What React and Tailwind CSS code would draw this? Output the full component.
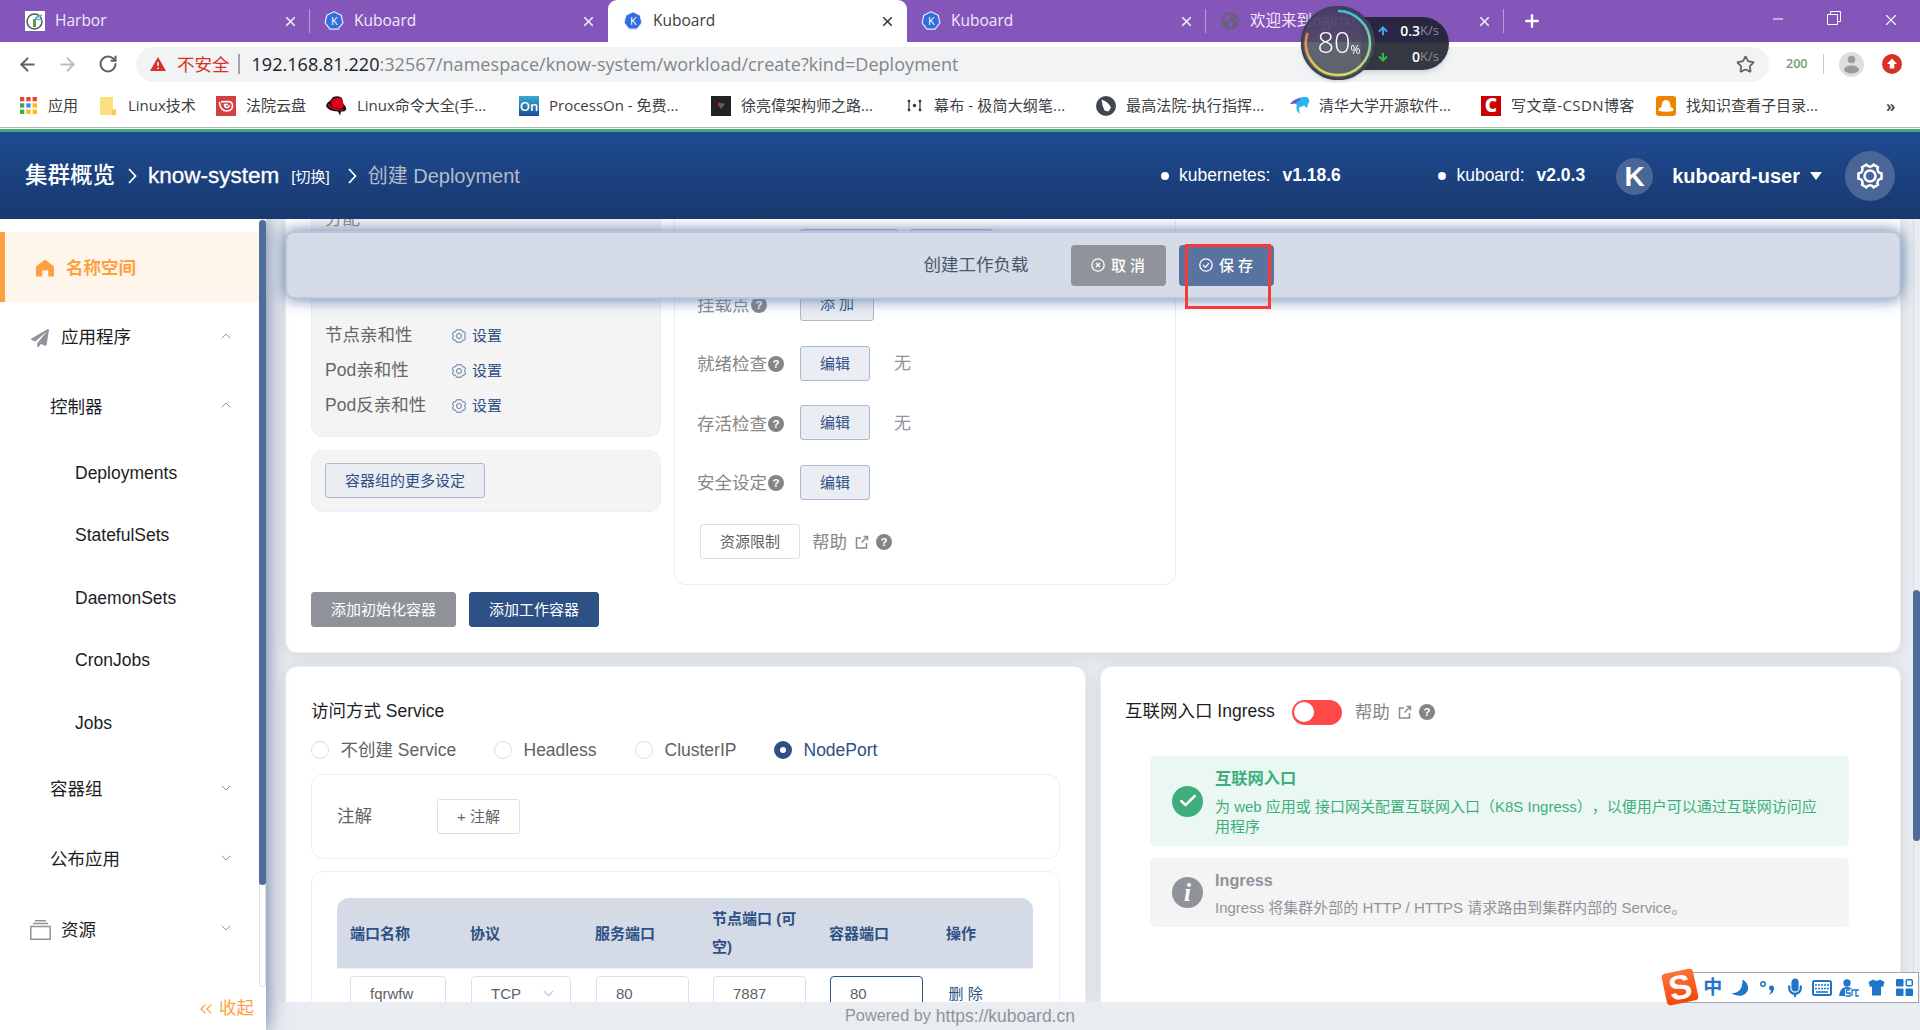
import React from 'react';
import {
  ArrowLeft, ArrowRight, RotateCw, Star, X, Plus, Minus, ChevronDown, ChevronUp,
  ChevronsLeft, Check, Mic, ArrowUp, ArrowDown,
} from 'lucide-react';
import { FaGlobeAmericas, FaPaperPlane } from 'react-icons/fa';

const KuboardIcon = () => (
  <svg viewBox="0 0 24 24" className="h-5 w-5 shrink-0">
    <path d="M12 1l8.6 4.1 2.1 9.2-5.9 7.5H7.2l-5.9-7.5 2.1-9.2z" fill="#2f6de0" stroke="#e8ecfb" strokeWidth="1.4" strokeLinejoin="round" />
    <text x="12.3" y="16.5" fontSize="13" fill="#fff" textAnchor="middle" fontFamily="Open Sans">K</text>
  </svg>
);

const HarborIcon = () => (
  <svg viewBox="0 0 20 20" className="h-5 w-5 shrink-0">
    <rect width="20" height="20" fill="#fff" />
    <circle cx="9.5" cy="10.5" r="7.5" fill="none" stroke="#4b5a55" strokeWidth="1.5" />
    <path d="M8 8h3v8H8z" fill="#5f9a4e" />
    <path d="M10 7l7-3M10 8l7 1" stroke="#6fa6c9" strokeWidth="1.6" />
  </svg>
);

const GearIcon = ({ className, sw = 1.6 }) => (
  <svg viewBox="0 0 24 24" className={className} fill="none" stroke="currentColor" strokeWidth={sw} strokeLinejoin="round">
    <path d="M9 2.2a3.4 3.4 0 0 0 6 0l3.9 2.3a3.4 3.4 0 0 0 3 5.2v4.6a3.4 3.4 0 0 0-3 5.2L15 21.8a3.4 3.4 0 0 0-6 0l-3.900-2.300a3.4 3.4 0 0 0-3-5.200V9.700a3.4 3.4 0 0 0 3-5.200z" />
    <circle cx="12" cy="12" r="4.700" />
  </svg>
);

const HexGear = () => (
  <svg viewBox="0 0 14 14" className="h-[14px] w-[14px]" fill="none" stroke="#4b6b98" strokeWidth=".9">
    <path d="M4.500.8h5l1 2 2.200.3.800 2-1 1.900 1 1.900-.8 2-2.200.3-1 2h-5l-1-2-2.200-.3-.8-2 1-1.900-1-1.900.8-2 2.200-.3z" />
    <circle cx="7" cy="7" r="2.500" />
  </svg>
);

const Help = () => (
  <svg viewBox="0 0 16 16" className="h-4 w-4 shrink-0">
    <circle cx="8" cy="8" r="8" fill="#858585" />
    <text x="8" y="12" fontSize="11.500" fontWeight="bold" fill="#fff" textAnchor="middle" fontFamily="Liberation Sans">?</text>
  </svg>
);

const LinkIcon = () => (
  <svg viewBox="0 0 14 14" className="h-[14px] w-[14px]" fill="none" stroke="#8a8d92" strokeWidth="1.500">
    <path d="M6 3H1.500v10h10V8M8.500 1.500h4v4M12.500 1.500L6.500 7.500" />
  </svg>
);

const tabs = [
  { title: 'Harbor', icon: <HarborIcon />, width: 'w-[310px] pl-[25px]', line: true },
  { title: 'Kuboard', icon: <KuboardIcon />, width: 'w-[298px] pl-[14px]' },
  { title: 'Kuboard', icon: <KuboardIcon />, width: 'w-[299px] pl-[15px]', active: true },
  { title: 'Kuboard', icon: <KuboardIcon />, width: 'w-[299px] pl-[14px]', line: true },
  { title: '欢迎来到nginx!', icon: <FaGlobeAmericas className="h-[18px] w-5 text-[#66607c]" />, width: 'w-[298px] pl-[14px]', line: true },
];

const AppsIcon = () => (
  <svg viewBox="0 0 17 17" className="h-[17px] w-[17px]">
    {['#ea4335', '#ea4335', '#ea4335', '#34a853', '#4285f4', '#fbbc04', '#34a853', '#fbbc04', '#fbbc04'].map((c, i) => (
      <rect key={i} x={(i % 3) * 6.3} y={Math.floor(i / 3) * 6.3} width="4.300" height="4.300" fill={c} />
    ))}
  </svg>
);

const bookmarks = [
  { label: '应用', icon: <AppsIcon />, width: 'w-[80px]', gap: 'gap-[11px]' },
  { label: 'Linux技术', width: 'w-[116px]', gap: 'gap-[12px]', icon: <svg viewBox="0 0 16 18" className="h-[18px] w-4"><path d="M1.500 0h11.500v12h3v4.500q0 1.500-1.500 1.500h-13Q0 18 0 16.500v-15Q0 0 1.500 0z" fill="#fddf82" /><path d="M12 13h4v3.500q0 1.500-2 1.500h-2z" fill="#f4c94f" /></svg> },
  { label: '法院云盘', width: 'w-[110px]', gap: 'gap-[10px]', icon: <svg viewBox="0 0 20 20" className="h-5 w-5"><rect width="20" height="20" fill="#d0413f" /><path d="M3.500 6Q4 15 11 15q5.500-.5 5.500-5T12 5.500l-7 .2M12 8.500H8.500q0 3 2.500 3t2-2.500" fill="none" stroke="#fff" strokeWidth="1.600" /></svg> },
  { label: 'Linux命令大全(手...', width: 'w-[193px]', gap: 'gap-[10px]', icon: <svg viewBox="0 0 21 20" className="h-5 w-[21px]"><path d="M0 10Q1 6 4 5l3-4q6-2 9 1l1.500 6Q21 11 20 14q-2 2-5 1.500l-1 4-2-4Q2 15 0 10z" fill="#111" /><path d="M5 7l2.500-5q2 1 4-.500 4-.5 5 3l1 4.500q1 4-5 3.500Q5 11.500 5 7z" fill="#e0001b" /><path d="M1.500 9Q5 14 13 14.500q4 .5 5.500-1.500-6 1-10-1Q4 10 3.500 7.500z" fill="#e0001b" /></svg> },
  { label: 'ProcessOn - 免费...', width: 'w-[192px]', gap: 'gap-[10px]', icon: <span className="h-5 w-5 bg-gradient-to-b from-[#3aa9d0] to-[#1c4f96] text-center text-[13px] font-semibold leading-5 text-white">On</span> },
  { label: '徐亮偉架构师之路...', width: 'w-[196px]', gap: 'gap-[10px]', icon: <svg viewBox="0 0 20 20" className="h-5 w-5"><rect width="20" height="20" fill="#222" /><path d="M7 9l3-2 3 2-3 4z" fill="#8b4a3a" /><circle cx="8.500" cy="8" r="1.500" fill="#b0343f" /><circle cx="11.500" cy="8.500" r="1.500" fill="#3b7f67" /></svg> },
  { label: '幕布 - 极简大纲笔...', width: 'w-[189px] tracking-[0.150px]', gap: 'gap-[12px]', icon: <svg viewBox="0 0 15 13" className="h-[13px] w-[15px]" fill="#333" stroke="#333"><path d="M2 2v9M13 2v9" strokeWidth="1.200" /><circle cx="2" cy="2" r="1" /><circle cx="2" cy="11" r="1" /><circle cx="13" cy="2" r="1" /><circle cx="13" cy="11" r="1" /><circle cx="7.500" cy="6.500" r="1.300" /></svg> },
  { label: '最高法院-执行指挥...', width: 'w-[194px] tracking-[0.150px]', gap: 'gap-[10px]', icon: <svg viewBox="0 0 20 20" className="h-5 w-5"><circle cx="10" cy="10" r="10" fill="#414750" /><path d="M5.500 3.500q7 2.500 9.500 8l-2.500 4-4-1q-2.500-5-3-11z" fill="#fff" /></svg> },
  { label: '清华大学开源软件...', width: 'w-[191px]', gap: 'gap-[9px]', icon: <svg viewBox="0 0 20 18" className="h-[18px] w-5"><path d="M0 7Q7-1 17 0q4 3 1 7l-1 4-3-2.500q-3 1.500-5 2 0 4 1 6.500Q5 13 7 8 4 5 0 7z" fill="#29b5ef" /><path d="M0 7Q5 1 11 2 7 7 0 7z" fill="#8552c5" /></svg> },
  { label: '写文章-CSDN博客', width: 'w-[175px] tracking-[0.400px]', gap: 'gap-[10px]', icon: <span className="h-5 w-5 bg-[#cb0000] text-center text-[19px] font-extrabold leading-[19px] text-white">C</span> },
  { label: '找知识查看子目录...', width: 'w-[200px]', gap: 'gap-[10px]', icon: <svg viewBox="0 0 20 20" className="h-5 w-5"><rect width="20" height="20" rx="3" fill="#f08300" /><path d="M3 15q-1.500-3 2.500-4Q5.500 4 10 4t4.500 7q4 1 2.500 4-7 1.500-14 0z" fill="#fff" /></svg> },
];

const BrowserChrome = () => (
  <div className="relative text-[#3c4043] [font-family:'Open_Sans','Noto_Sans_CJK_SC',sans-serif]">
    <div className="flex h-[42px] bg-[#8456ba] text-[15.500px]">
      {tabs.map((t, i) => (
        <div
          key={i}
          className={`flex shrink-0 items-center pr-[12px] ${t.width} ${t.active ? 'rounded-t-[9px] bg-white text-[#3c4043]' : 'text-[#f1e8fa]'}`}
        >
          {t.icon}
          <span className="ml-[10px] grow whitespace-nowrap">{t.title}</span>
          <X className="h-[15px] w-[15px]" strokeWidth={2.800} />
          {t.line && <span className="-mr-[12px] ml-[11px] h-6 w-px bg-[#b69bd8]" />}
        </div>
      ))}
      <Plus className="ml-[18px] mt-[11px] h-[20px] w-[20px] text-white" strokeWidth={2.800} />
      <div className="flex grow items-start justify-end gap-[41px] pr-[20px] pt-[11px] text-white">
        <Minus className="h-4 w-4" strokeWidth={1.500} />
        <svg viewBox="0 0 14 14" className="h-[14px] w-[14px]" fill="none" stroke="#fff"><path d="M.5 3.500h10v10H.5zM3.500 3.500v-3h10v10h-3" /></svg>
        <X className="h-[18px] w-[18px]" strokeWidth={1.500} />
      </div>
    </div>

    <div className="flex h-[44px] items-center bg-white pl-[17px]">
      <ArrowLeft className="h-[21px] w-[21px] text-[#5f6368]" strokeWidth={2.400} />
      <ArrowRight className="ml-[19px] h-[21px] w-[21px] text-[#bcbec1]" strokeWidth={2.400} />
      <RotateCw className="ml-[20px] h-[20px] w-[20px] text-[#5f6368]" strokeWidth={2.400} />
      <div className="ml-[18px] flex h-[35px] w-[1633px] items-center rounded-full bg-[#f1f3f4] pl-[14px] pr-[14px] text-[17.500px]">
        <svg viewBox="0 0 16 14" className="h-[14px] w-4"><path d="M8 0l8 14H0z" fill="#d93025" /><path d="M8 5v4M8 10.500v1.500" stroke="#fff" strokeWidth="1.500" /></svg>
        <span className="ml-[11px] text-[#d93025]">不安全</span>
        <span className="ml-[8px] h-5 w-[2px] bg-[#a3a5a8]" />
        <span className="ml-[12px] grow whitespace-nowrap pt-px text-[18px] tracking-[0.040px] text-[#80868b]">
          <span className="text-[#202124]">192.168.81.220</span>:32567/namespace/know-system/workload/create?kind=Deployment
        </span>
        <Star className="h-[19px] w-[19px] text-[#5f6368]" strokeWidth={2.200} />
      </div>
      <span className="ml-[17px] text-[12.500px] font-semibold text-[#6d9f6b]">200</span>
      <span className="ml-[16px] h-5 w-px bg-[#c6c8ca]" />
      <svg viewBox="0 0 25 25" className="ml-[15px] h-[25px] w-[25px]"><circle cx="12.500" cy="12.500" r="12.500" fill="#dedede" /><circle cx="12.500" cy="7.500" r="3.800" fill="#9b9b9b" /><ellipse cx="12.500" cy="17.500" rx="7.500" ry="4" fill="#9b9b9b" /></svg>
      <svg viewBox="0 0 20 20" className="ml-[18px] h-5 w-5"><circle cx="10" cy="10" r="10" fill="#d93025" /><path d="M10 4.500l5 5.500h-2.700v4.500H7.700V10H5z" fill="#fff" /></svg>
    </div>

    <div className="flex h-[41px] items-center bg-white pl-[20px] pb-[2px] text-[15px]">
      {bookmarks.map((b) => (
        <div key={b.label} className={`flex shrink-0 items-center whitespace-nowrap ${b.width} ${b.gap}`}>
          {b.icon}
          <span>{b.label}</span>
        </div>
      ))}
      <span className="ml-[30px] text-[17px] font-semibold leading-none">»</span>
    </div>
    <div className="h-px bg-[#b4b4b4]" />
    <div className="h-px bg-white" />

    {/* floating network meter */}
    <div className="absolute left-[1301px] top-[6px] h-[74px] w-[148px]">
      <div className="absolute left-[60px] top-[11px] flex h-[53px] w-[88px] flex-col justify-center rounded-r-full bg-gradient-to-b from-[#292642] from-45% to-[#343843] to-50% pl-[16px] shadow-md">
        <div className="flex h-[26px] items-center text-[14px] text-white"><ArrowUp className="h-3 w-3 text-[#42a4ea]" strokeWidth={4} /><span className="grow text-right font-semibold">0.3</span><span className="mr-[10px] text-[13px] text-[#898997]">K/s</span></div>
        <div className="flex h-[26px] items-center text-[14px] text-white"><ArrowDown className="h-3 w-3 text-[#35b844]" strokeWidth={4} /><span className="grow text-right font-semibold">0</span><span className="mr-[10px] text-[13px] text-[#898997]">K/s</span></div>
      </div>
      <svg viewBox="0 0 74 74" className="absolute h-[74px] w-[74px] drop-shadow">
        <defs>
          <linearGradient id="ball" x1="0" y1="0" x2="0" y2="1">
            <stop offset="0" stopColor="#433a66" />
            <stop offset=".48" stopColor="#504b64" />
            <stop offset=".5" stopColor="#545863" />
            <stop offset="1" stopColor="#4f5663" />
          </linearGradient>
          <linearGradient id="ring" x1="0" y1="0" x2="0" y2="1">
            <stop offset="0" stopColor="#35c5dd" />
            <stop offset=".5" stopColor="#83d5a0" />
            <stop offset="1" stopColor="#d9dc5c" />
          </linearGradient>
          <linearGradient id="ringWarm" x1="0" y1="0" x2="0" y2="1">
            <stop offset="0" stopColor="#ec7457" />
            <stop offset="1" stopColor="#dfd955" />
          </linearGradient>
        </defs>
        <circle cx="37" cy="37" r="36" fill="url(#ball)" fillOpacity=".9" stroke="#3c4252" strokeWidth="2.500" />
        <path d="M37 5a32 32 0 0 1 0 64" fill="none" stroke="url(#ring)" strokeWidth="2.500" />
        <path d="M37 69A32 32 0 0 1 6.500 27" fill="none" stroke="url(#ringWarm)" strokeWidth="2.500" />
        <text x="33" y="47" fontSize="29" fontWeight="300" fill="#fff" textAnchor="middle" fontFamily="Open Sans">80</text>
        <text x="49.500" y="48" fontSize="12" fill="#fff" fontFamily="Open Sans">%</text>
      </svg>
    </div>
  </div>
);

const Crumb = ({ className }) => (
  <svg viewBox="0 0 9 16" className={`h-4 w-[9px] ${className}`} fill="none" stroke="#fff" strokeWidth="1.800"><path d="M1 1l6.500 7L1 15" /></svg>
);

const Header = () => (
  <header className="relative z-20 flex h-[90px] items-center border-t-[3px] border-[#3eaf7c] bg-gradient-to-b from-[#1e4b92] to-[#19386e] pl-[25px] pr-[25px] text-white">
    <span className="text-[22.500px] font-medium">集群概览</span>
    <Crumb className="ml-[13px]" />
    <span className="ml-[11px] text-[22.500px] [-webkit-text-stroke:0.300px_white]">know-system</span>
    <span className="ml-[12px] mt-[2px] text-[15px]">[切换]</span>
    <Crumb className="ml-[18px]" />
    <span className="ml-[11px] grow text-[20px] text-[#b3bccb]">创建 Deployment</span>
    <div className="flex items-center text-[17.500px]">
      <span className="h-2 w-2 rounded-full bg-white" />
      <span className="ml-[10px]">kubernetes:</span>
      <b className="ml-[12px] w-[60px]">v1.18.6</b>
      <span className="ml-[96px] h-2 w-2 rounded-full bg-white" />
      <span className="ml-[10px]">kuboard:</span>
      <b className="ml-[12px]">v2.0.3</b>
    </div>
    <span className="ml-[31px] mt-[2px] flex h-[37px] w-[37px] items-center justify-center rounded-full bg-[#4a6697] text-[28px] font-bold">K</span>
    <b className="ml-[19px] text-[20px]">kuboard-user</b>
    <span className="ml-[10px] border-x-[6px] border-t-[8px] border-x-transparent border-t-white" />
    <span className="ml-[23px] mt-[1px] flex h-[50px] w-[50px] items-center justify-center rounded-full bg-[#4a6697]">
      <GearIcon className="h-[28px] w-[28px]" sw={2.200} />
    </span>
  </header>
);

const controllers = ['Deployments', 'StatefulSets', 'DaemonSets', 'CronJobs', 'Jobs'];

const MenuRow = ({ children, open, pad = 'pl-[50px]' }) => (
  <div className={`flex h-[70px] shrink-0 items-center pr-[25px] ${pad}`}>
    <span className="flex grow items-center">{children}</span>
    {open
      ? <ChevronUp className="mb-1 h-4 w-4 text-[#909399]" strokeWidth={1.500} />
      : <ChevronDown className="mb-1 h-4 w-4 text-[#909399]" strokeWidth={1.500} />}
  </div>
);

const Sidebar = () => (
  <aside className="z-10 flex w-[266px] shrink-0 flex-col bg-white text-[17.500px] text-[#1d1d1f] shadow-[0_0_20px_#5a7096]">
    <div className="flex h-[768px]">
      <nav className="flex w-[259px] flex-col pt-[13px]">
        <div className="flex h-[70px] items-center border-l-[5px] border-[#ffa040] bg-[#fff6eb] pl-[31px] pt-[2px] font-bold text-[#ffa040]">
          <svg viewBox="0 0 19 18" className="h-[18px] w-[18px]"><path d="M9.500 0L19 7.500V18h-6v-6.500H6.500V18H0V7.500z" fill="#ffa040" /></svg>
          <span className="ml-[12px]">名称空间</span>
        </div>
        <MenuRow open pad="pl-[31px] pt-px">
          <FaPaperPlane className="mr-[12px] h-[18px] w-[18px] text-[#909399]" />应用程序
        </MenuRow>
        <MenuRow open>控制器</MenuRow>
        {controllers.map((c) => (
          <div key={c} className="flex h-[62.500px] items-center pb-px pl-[75px]">{c}</div>
        ))}
        <MenuRow>容器组</MenuRow>
        <MenuRow>公布应用</MenuRow>
        <MenuRow pad="pl-[30px] pt-px">
          <svg viewBox="0 0 21 20" className="mr-[10px] h-5 w-[21px]" fill="none" stroke="#909399" strokeWidth="1.500"><path d="M.8 6.500h19.400v12.700H.8zM3 3.500h15M5 .8h11" /></svg>
          资源
        </MenuRow>
      </nav>
      <div className="w-[7px] rounded-full border border-[#e2e2e2] bg-white">
        <div className="-mx-px h-[665px] rounded-full bg-[#4f6c9a]" />
      </div>
    </div>
    <div className="flex grow items-center justify-end pr-[12px] text-[#ffa040]">
      <ChevronsLeft className="mr-[3px] h-[20px] w-[20px]" strokeWidth={1.400} />收起
    </div>
  </aside>
);

const PlainButton = ({ children, className = '' }) => (
  <button className={`h-[35px] shrink-0 rounded-[3px] border text-[15px] leading-none ${className}`}>{children}</button>
);

const Affinity = ({ label }) => (
  <div className="flex h-[35px] items-center">
    <span className="w-[127px]">{label}</span>
    <HexGear />
    <span className="ml-[6px] text-[15px] text-[#2d5085]">设置</span>
  </div>
);

const CheckRow = ({ label, button = '编辑', value, width = 'w-[70px]' }) => (
  <div className="flex h-[59.500px] items-center">
    <span className="mt-[2px] flex w-[103px] items-center gap-px">{label}<Help /></span>
    <PlainButton className={`border-[#a9b9d1] bg-[#eaedf2] text-[#2d5085] ${width}`}>{button}</PlainButton>
    <span className="ml-[24px] mt-[2px] text-[17px] text-[#909399]">{value}</span>
  </div>
);

const ContainerCard = () => (
  <section className="h-[434px] shrink-0 rounded-b-[12px] border-x border-b border-[#ebeef5] bg-white pl-[25px] shadow-[0_2px_15px_rgba(0,0,0,0.100)]">
    <div className="flex h-[366px] items-start gap-[13px]">
      <div className="w-[350px] text-[17.500px] text-[#666]">
        <div className="flow-root h-[218px] rounded-b-[12px] border-x border-b border-[#ebeef5] bg-[#f4f4f4] pl-[13px]">
          <div className="-mt-[12px] h-[111px] text-[#888]">分配</div>
          <Affinity label="节点亲和性" />
          <Affinity label="Pod亲和性" />
          <Affinity label="Pod反亲和性" />
        </div>
        <div className="mt-[13px] h-[62px] rounded-[12px] border border-[#ebeef5] bg-[#f4f4f4] pl-[13px] pt-[12px]">
          <PlainButton className="w-[160px] border-[#a9b9d1] bg-[#eaedf2] text-[#2d5085]">容器组的更多设定</PlainButton>
        </div>
      </div>
      <div className="h-[366px] w-[502px] rounded-b-[12px] border-x border-b border-[#ebeef5] pl-[22px] text-[17.500px] text-[#888]">
        <div className="flex h-[55px] gap-[12px] pl-[103px] pt-[10px]">
          <PlainButton className="w-[98px] border-[#a9b9d1] bg-[#eaedf2]" />
          <PlainButton className="w-[83px] border-[#a9b9d1] bg-[#eaedf2]" />
        </div>
        <CheckRow label="挂载点" button="添 加" width="w-[74px]" />
        <CheckRow label="就绪检查" value="无" />
        <CheckRow label="存活检查" value="无" />
        <CheckRow label="安全设定" />
        <div className="flex h-[59.500px] items-center pl-[3px]">
          <PlainButton className="w-[100px] border-[#dcdfe6] bg-white text-[#606266]">资源限制</PlainButton>
          <span className="ml-[12px] mr-[8px]">帮助</span><LinkIcon /><span className="w-[7px]" /><Help />
        </div>
      </div>
    </div>
    <div className="flex gap-[13px] pt-[7px] text-white">
      <PlainButton className="w-[145px] border-[#8f9299] bg-[#8f9299]">添加初始化容器</PlainButton>
      <PlainButton className="w-[130px] border-[#2d5085] bg-[#2d5085]">添加工作容器</PlainButton>
    </div>
  </section>
);

const serviceTypes = [
  { label: '不创建 Service', width: 'w-[183px]' },
  { label: 'Headless', width: 'w-[141px]' },
  { label: 'ClusterIP', width: 'w-[139px]' },
  { label: 'NodePort', width: 'w-[140px]', checked: true },
];

const Field = ({ value, width, focused, select }) => (
  <div className={`flex h-[36px] shrink-0 items-center rounded-[4px] border pb-[2px] pl-[19px] pr-[13px] ${width} ${focused ? 'border-[#2d5085]' : 'border-[#dcdfe6]'}`}>
    <span className="grow">{value}</span>
    {select && <ChevronDown className="h-[17px] w-[17px] text-[#c0c4cc]" strokeWidth={1.800} />}
  </div>
);

const ServiceCard = () => (
  <section className="w-[801px] shrink-0 rounded-t-[12px] border border-b-0 border-[#ebeef5] bg-white pl-[25px] pr-[25px] text-[17.500px] text-[#606266] shadow-[0_2px_15px_rgba(0,0,0,0.100)]">
    <h2 className="mt-[31px] h-[26px] leading-[26px] text-[#1d1d1f]">访问方式 Service</h2>
    <div className="mt-[13px] flex h-[26px] items-center">
      {serviceTypes.map((s) => (
        <label key={s.label} className={`flex items-center ${s.width} ${s.checked ? 'text-[#2d5085]' : ''}`}>
          <span className={`h-[18px] w-[18px] shrink-0 rounded-full border ${s.checked ? 'border-[6px] border-[#2d5085]' : 'border-[#dcdfe6]'}`} />
          <span className="ml-[11.500px] whitespace-nowrap">{s.label}</span>
        </label>
      ))}
    </div>
    <div className="mt-[11px] flex h-[85px] items-center rounded-[12px] border border-[#ebeef5] pl-[25px]">
      <span className="w-[100px]">注解</span>
      <PlainButton className="w-[83px] border-[#dcdfe6] bg-white">+ 注解</PlainButton>
    </div>
    <div className="mt-[12px] h-[200px] rounded-[12px] border border-[#ebeef5] pl-[25px] pr-[26px] pt-[26px] text-[15px]">
      <div className="flex h-[71px] items-center rounded-t-[12px] border-b border-[#ebeef5] bg-[#d5dbe6] pl-[13px] font-bold text-[#2d5085]">
        <span className="w-[120px]">端口名称</span>
        <span className="w-[125px]">协议</span>
        <span className="w-[117px]">服务端口</span>
        <span className="w-[117px] pr-[20px] leading-[28px]">节点端口 (可空)</span>
        <span className="w-[117px]">容器端口</span>
        <span>操作</span>
      </div>
      <div className="flex items-center pl-[13px] pt-[7px]">
        <Field value="fqrwfw" width="w-[96px]" />
        <span className="w-[25px]" />
        <Field value="TCP" width="w-[100px]" select />
        <span className="w-[25px]" />
        <Field value="80" width="w-[92.500px]" />
        <span className="w-[24.500px]" />
        <Field value="7887" width="w-[92.500px]" />
        <span className="w-[24.500px]" />
        <Field value="80" width="w-[92.500px]" focused />
        <span className="-mt-[2px] ml-[26px] text-[#2d5085]">删 除</span>
      </div>
    </div>
  </section>
);

const IngressCard = () => (
  <section className="w-[801px] shrink-0 rounded-t-[12px] border border-b-0 border-[#ebeef5] bg-white pl-[24px] text-[17.500px] shadow-[0_2px_15px_rgba(0,0,0,0.100)]">
    <div className="mt-[32px] flex h-[26px] items-center text-[#888]">
      <h2 className="-mt-[2px] text-[#1d1d1f]">互联网入口 Ingress</h2>
      <span className="ml-[17px] flex h-[25px] w-[50px] items-center rounded-full bg-[#ff4949] p-[2px]"><span className="h-5 w-5 rounded-full bg-white" /></span>
      <span className="ml-[13px] mr-[8px]">帮助</span><LinkIcon /><span className="w-[7px]" /><Help />
    </div>
    <div className="ml-[25px] mt-[31px] flex h-[90px] w-[699px] items-center rounded-[5px] bg-[#ebf7f2] pl-[22px] text-[#3eaf7c]">
      <span className="flex h-[31px] w-[31px] shrink-0 items-center justify-center rounded-full bg-[#3eaf7c]"><Check className="h-5 w-5 text-white" strokeWidth={3} /></span>
      <div className="ml-[12px] w-[606px]">
        <div className="text-[16.250px] font-bold leading-[24px]">互联网入口</div>
        <p className="mt-[7px] text-[15px] leading-[20px] [text-spacing-trim:space-all]">为 web 应用或 接口网关配置互联网入口（K8S Ingress），以便用户可以通过互联网访问应用程序</p>
      </div>
    </div>
    <div className="ml-[25px] mt-[12px] flex h-[69px] w-[699px] items-center rounded-[5px] bg-[#f4f4f5] pl-[22px] text-[#909399]">
      <span className="flex h-[31px] w-[31px] shrink-0 items-center justify-center rounded-full bg-[#909399] text-[25px] font-bold italic leading-none text-white [font-family:'Liberation_Serif',serif]">i</span>
      <div className="ml-[12px]">
        <div className="text-[16.250px] font-bold leading-[24px]">Ingress</div>
        <p className="mt-[6px] text-[15px] leading-[20px]">Ingress 将集群外部的 HTTP / HTTPS 请求路由到集群内部的 Service。</p>
      </div>
    </div>
  </section>
);

const ActionBar = () => (
  <div className="absolute left-[19px] top-[12px] flex h-[68px] w-[1616px] items-center justify-center rounded-[9px] border-2 border-[#bac7da] bg-[#d5dbe7] pl-[11px] text-white shadow-[0_0_16px_#5a7aa8]">
    <span className="mr-[42px] text-[17.500px] text-[#475669]">创建工作负载</span>
    <button className="mr-[13px] flex h-[41px] w-[95px] items-center justify-center rounded-[4px] bg-[#909399] text-[15px] font-medium">
      <svg viewBox="0 0 14 14" className="mr-[6px] h-[14px] w-[14px]" fill="none" stroke="#fff" strokeWidth="1.300"><circle cx="7" cy="7" r="6.200" /><path d="M5 5l4 4M9 5L5 9" /></svg>取 消
    </button>
    <button className="flex h-[41px] w-[95px] items-center justify-center rounded-[4px] bg-[#5873a0] text-[15px] font-medium">
      <svg viewBox="0 0 14 14" className="mr-[6px] h-[14px] w-[14px]" fill="none" stroke="#fff" strokeWidth="1.300"><circle cx="7" cy="7" r="6.200" /><path d="M4 7l2.300 2.300L10 5" /></svg>保 存
    </button>
  </div>
);

// input method toolbar docked at the bottom right of the screen
const ImeBar = () => (
  <div className="absolute bottom-[27px] right-px z-20 grid h-[31px] w-[243px] grid-cols-8 place-items-center border border-[#9fa3b3] bg-white pl-[22px] text-[#1f75c9]">
    <span className="absolute -left-[13px] -top-[2px] flex h-[32px] w-[32px] -rotate-12 items-center justify-center rounded-[4px] bg-gradient-to-b from-[#ff7038] to-[#f24607] text-[34px] font-bold leading-none text-white">S</span>
    <span className="text-[19px] font-bold leading-none">中</span>
    <svg viewBox="0 0 18 18" className="h-[18px] w-[18px]"><path d="M11.500 0.500Q19 5 16.500 12 12 20 0.500 14.500 12 14 11.500.5z" fill="currentColor" /></svg>
    <svg viewBox="0 0 16 16" className="h-4 w-4"><circle cx="4" cy="4" r="2.300" fill="none" stroke="currentColor" strokeWidth="1.500" /><circle cx="12.500" cy="8" r="2.500" fill="currentColor" /><path d="M15 8q0 5-5 7 2.500-3 2-6z" fill="currentColor" /></svg>
    <Mic className="h-[20px] w-[20px] [&>rect]:fill-current" strokeWidth={2.600} />
    <svg viewBox="0 0 20 16" className="h-4 w-5" fill="none" stroke="currentColor"><rect x="1" y="1" width="18" height="14" rx="1.500" strokeWidth="2" /><path d="M3 5h14M3 8.500h14" strokeWidth="1.600" strokeDasharray="2 1" /><path d="M4 12h12" strokeWidth="1.600" /></svg>
    <svg viewBox="0 0 21 18" className="h-[18px] w-[21px]"><circle cx="8" cy="4" r="3.700" fill="currentColor" /><path d="M0 17q1-9 8-9 4 0 6 3v6z" fill="currentColor" /><rect x="6" y="10" width="14" height="8" fill="#fff" /><path d="M11 11H7.500v3H11v3H6.500M20 11h-7v6M17 11v6h3" fill="none" stroke="currentColor" strokeWidth="1.300" /></svg>
    <svg viewBox="0 0 17 17" className="h-[17px] w-[17px]" fill="currentColor"><path d="M5 .5q3.500 2.500 7 0l4.500 2.500-1.500 5-2-.5V16.500H4V7.500L2 8 .5 3z" /></svg>
    <svg viewBox="0 0 17 17" className="h-[17px] w-[17px]" fill="currentColor"><rect width="7.500" height="7.500" rx="1" /><rect y="9.500" width="7.500" height="7.500" rx="1" /><rect x="9.500" y="9.500" width="7.500" height="7.500" rx="1" /><rect x="10.200" y=".7" width="6.100" height="6.100" rx="1" fill="none" stroke="currentColor" strokeWidth="1.400" /></svg>
  </div>
);

const App = () => (
  <div className="relative flex h-[1030px] w-[1920px] flex-col overflow-hidden bg-white leading-[1.400] [font-family:'Liberation_Sans','Noto_Sans_CJK_SC',sans-serif]">
    <BrowserChrome />
    <Header />
    <div className="flex min-h-0 grow">
      <Sidebar />
      <main className="relative flex grow flex-col overflow-hidden bg-[#e9edf2]">
        <div className="flex h-[783px]">
          <div className="flex w-[1647px] flex-col overflow-hidden pl-[19px] pr-[12px]">
            <ContainerCard />
            <div className="flex min-h-0 grow gap-[14px] pt-[13px]">
              <ServiceCard />
              <IngressCard />
            </div>
          </div>
          <div className="w-[7px] border-l border-[#d8dce3] pt-[371px]">
            <div className="-ml-px h-[251px] rounded-full bg-[#4f6c9a]" />
          </div>
        </div>
        <footer className="flex h-[28px] items-start justify-center pr-[266px] text-[16.250px] leading-[26px] text-[#909399]">
          <span>Powered by</span>
          <span className="ml-[5px] mt-px text-[17.500px]">https://kuboard.cn</span>
        </footer>
        <ActionBar />
      </main>
    </div>
    {/* marker around the save button */}
    <div className="absolute left-[1185px] top-[244px] z-20 h-[65px] w-[86px] border-[3px] border-[#fb3838]" />
    <ImeBar />
  </div>
);

export default App;
